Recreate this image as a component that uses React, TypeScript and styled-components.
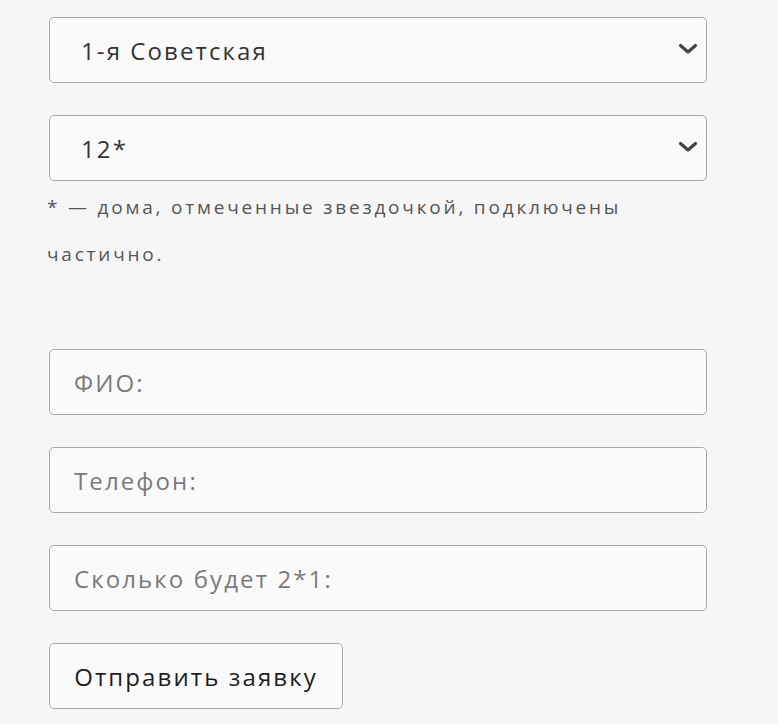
import React from "react";
import styled, { createGlobalStyle } from "styled-components";

const Global = createGlobalStyle`
  html, body { margin: 0; padding: 0; background: #f6f6f6; }
  body { font-family: "Open Sans", "Noto Sans", sans-serif; }
`;

const Page = styled.div`
  width: 778px;
  height: 724px;
  box-sizing: border-box;
  padding: 17px 0 0 49px;
  background: #f6f6f6;
  overflow: hidden;
`;

const Form = styled.form`
  width: 658px;
  display: flex;
  flex-direction: column;
`;

const SelectWrap = styled.div<{ $mt?: number }>`
  position: relative;
  margin-top: ${(p) => p.$mt ?? 0}px;
`;

const fieldText = `
  font-family: "Open Sans", "Noto Sans", sans-serif;
  font-size: 24px;
  letter-spacing: 2.1px;
`;

const Select = styled.select`
  appearance: none;
  -webkit-appearance: none;
  width: 100%;
  height: 66px;
  box-sizing: border-box;
  border: 1px solid #a9a9a9;
  border-radius: 5px;
  background: #fafafa;
  padding: 0 60px 0 31px;
  ${fieldText}
  color: #333;
  outline: none;
`;

const Chevron = styled.svg`
  position: absolute;
  right: 9px;
  top: 26px;
  width: 20px;
  height: 12px;
  pointer-events: none;
`;

const Note = styled.p`
  margin: 3px 0 0 -2px;
  font-size: 19px;
  line-height: 47px;
  color: #555;
  letter-spacing: 2.8px;
`;

const Input = styled.input<{ $mt: number }>`
  width: 100%;
  height: 66px;
  box-sizing: border-box;
  margin-top: ${(p) => p.$mt}px;
  border: 1px solid #a9a9a9;
  border-radius: 5px;
  background: #fafafa;
  padding: 0 24px;
  ${fieldText}
  color: #333;
  outline: none;
  &::placeholder { color: #7a7a7a; }
`;

const Button = styled.button`
  align-self: flex-start;
  margin-top: 32px;
  width: 294px;
  height: 66px;
  box-sizing: border-box;
  border: 1px solid #a9a9a9;
  border-radius: 5px;
  background: #fafafa;
  ${fieldText}
  color: #1e1e1e;
  padding: 0;
`;

const ChevronIcon = () => (
  <Chevron viewBox="0 0 20 12">
    <path d="M2.5 2.5 L10 9 L17.5 2.5" fill="none" stroke="#444" strokeWidth="3.2" strokeLinecap="round" strokeLinejoin="round" />
  </Chevron>
);

export default function App() {
  return (
    <Page>
      <Global />
      <Form onSubmit={(e) => e.preventDefault()}>
        <SelectWrap>
          <Select defaultValue="1">
            <option value="1">1-я Советская</option>
          </Select>
          <ChevronIcon />
        </SelectWrap>
        <SelectWrap $mt={32}>
          <Select defaultValue="12">
            <option value="12">12*</option>
          </Select>
          <ChevronIcon />
        </SelectWrap>
        <Note>
          * — дома, отмеченные звездочкой, подключены
          <br />
          частично.
        </Note>
        <Input $mt={71} placeholder="ФИО:" />
        <Input $mt={32} placeholder="Телефон:" />
        <Input $mt={32} placeholder="Сколько будет 2*1:" />
        <Button type="submit">Отправить заявку</Button>
      </Form>
    </Page>
  );
}
